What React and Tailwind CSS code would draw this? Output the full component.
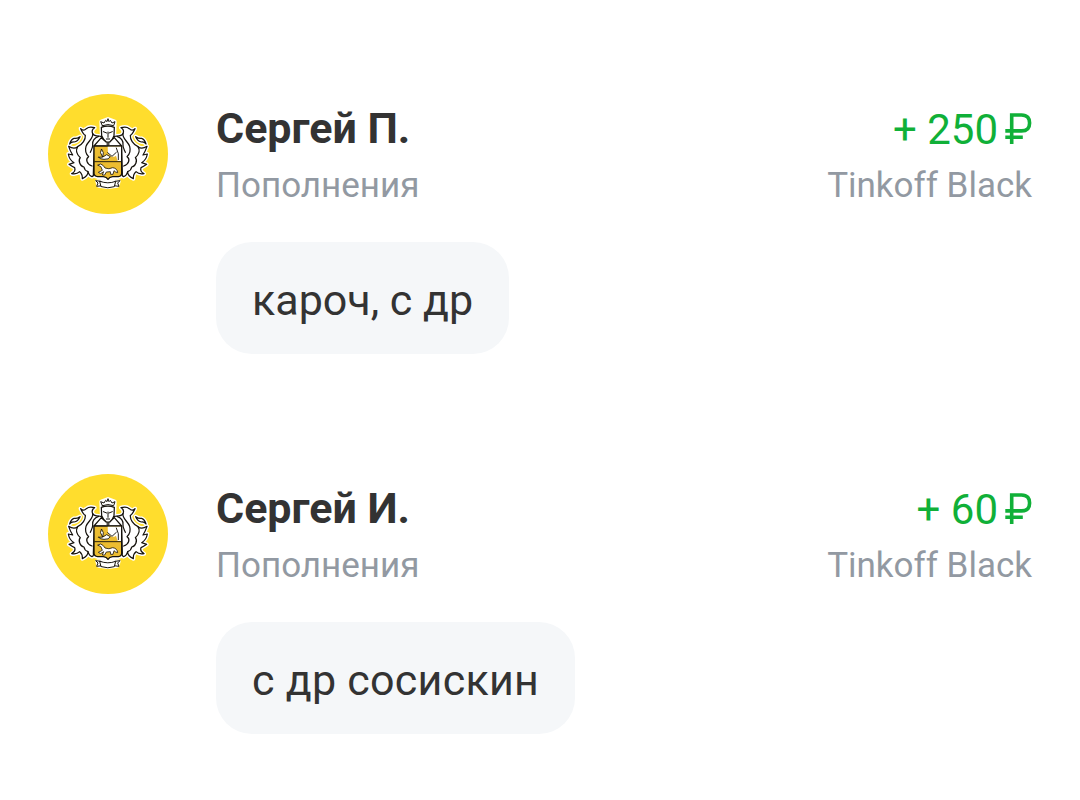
const operations = [
  { id: 1, name: 'Сергей П.', category: 'Пополнения', amount: '250', account: 'Tinkoff Black', message: 'кароч, с др', tracking: 'tracking-[0px]' },
  { id: 2, name: 'Сергей И.', category: 'Пополнения', amount: '60', account: 'Tinkoff Black', message: 'с др сосискин', tracking: 'tracking-[0.26px]' },
]

// One side of the mantling, mirrored for the other side
const LEAVES =
  'M163 180 L160 262 Q162 270 156 272 Q148 270 144 257 Q144 270 127 278 Q128 264 119 257 Q110 266 95 263 Q108 256 104 245 Q97 242 87 235 L102 230 Q88 222 85 204 L98 207 Q91 196 86 181 Q102 191 113 182 C128 175 137 160 136 148 Q130 145 122 128 Q131 137 139 128 Q148 120 164 125 Q153 131 158 143 Q162 150 176 150 L186 152 L184 166 Z'
const FOLDS =
  'M158 143 C161 158 143 166 138 181 C134 195 137 203 146 212 M176 151 C164 155 157 164 158 176 C159 187 153 193 151 199 M113 182 C106 194 112 207 121 215 M121 215 C113 224 121 242 132 243 M146 212 C136 218 139 234 156 240 M132 243 C133 250 138 255 144 257'
const PLUME = 'M89 174 Q93 160 102 157 Q110 159 120 152 Q114 166 102 168 Q94 167 89 174 Z'

function Side() {
  return (
    <>
      <path d={LEAVES} />
      <path d={PLUME} />
      <path d={FOLDS} fill="none" />
    </>
  )
}

function Crest() {
  return (
    <svg viewBox="24 24 360 360" className="size-full" aria-hidden="true">
      {/* white outline behind the whole emblem */}
      <g fill="#fff" stroke="#fff" strokeWidth="12" strokeLinejoin="round">
        <path d={LEAVES} />
        <path d={PLUME} />
        <g transform="matrix(-1 0 0 1 407 0)">
          <path d={LEAVES} />
          <path d={PLUME} />
        </g>
        <path d="M184 107 L204 99 L224 107 L222 160 L244 182 L244 270 L204 281 L164 270 L164 182 L186 160 Z" />
        <path d="M172 286 L204 290 L236 286 L232 299 L204 303 L176 299 Z" />
      </g>

      <g fill="#fff" stroke="#15120c" strokeWidth="3.7" strokeLinejoin="round" strokeLinecap="round">
        <Side />
        <g transform="matrix(-1 0 0 1 407 0)">
          <Side />
        </g>

        {/* helmet and crown */}
        <path d="M184 155 L162 180 H245 L223 155 L209 168 H199 Z" />
        <path d="M184 124 L185 149 Q190 161 199 168 H209 Q218 161 222 149 L223 124 Q204 117 184 124 Z" />
        <path d="M190 137 L200 141 M217 137 L207 141 M204 138 V154 M199 159 H209 M204 170 V179 M200 174 H208" fill="none" strokeWidth="3" />
        <path d="M187 119 L182 107 L192 111 L197 103 L201 107 L204 98 L207 107 L211 103 L216 111 L225 107 L221 119 Q204 112 187 119 Z" strokeWidth="3" />

        {/* shield */}
        <path d="M162 180 H245 V262 Q245 271 235 272 H218 Q208 273 204 280 Q200 273 190 272 H173 Q162 271 162 262 Z" fill="#ecbd31" strokeWidth="4" />
        <path d="M203 182 H243 V225 H233 L228 209 Q218 216 211 209 L204 203 Z" stroke="none" />
        <path d="M176 214 Q188 217 200 206 L211 212 Q207 221 192 220 Q181 220 176 214 Z M185 190 L190 200 L188 213 L182 201 Z" strokeWidth="2.6" />
        <path d="M229 186 L235 203 L235 221 M203 200 L216 211 L229 199 M164 227 H243" fill="none" strokeWidth="2.8" />
        <path d="M174 237 L182 234 L190 239 L195 246 Q207 251 218 245 Q232 247 233 260 L227 258 L222 254 L219 265 H212 L211 257 L199 258 L194 267 H187 L191 257 L182 263 L175 259 L187 253 L183 243 Z" strokeWidth="2.4" />

        {/* ribbon */}
        <path d="M182 286 L167 284 L174 291 L170 301 L186 299 Z M225 286 L240 284 L233 291 L237 301 L221 299 Z" strokeWidth="3" />
        <path d="M180 286 Q204 295 227 286 L223 302 Q204 309 184 302 Z" strokeWidth="3" />
      </g>
    </svg>
  )
}

function Ruble() {
  return (
    <svg viewBox="0 0 28 32" className="mb-0.5 ml-1.5 h-8 w-7" fill="none" stroke="currentColor" strokeWidth="3.6" aria-hidden="true">
      <path d="M7.7 31 V2 H17.5 C23.5 2 25.6 5.5 25.6 9.9 C25.6 14.4 23.5 17.9 17.5 17.9 H1.3 M1.3 24.2 H18.8" />
    </svg>
  )
}

function Operation({ name, category, amount, account, message, tracking }) {
  return (
    <article className="flex h-[380px] items-start">
      <div className="size-[120px] shrink-0 overflow-hidden rounded-full bg-[#ffdd2d]">
        <Crest />
      </div>
      <div className="ml-12 flex-1">
        <div className="flex h-[120px] justify-between pt-2">
          <div>
            <h2 className="text-[43px] leading-[52px] font-bold text-[#333333]">{name}</h2>
            <p className="text-[35px] leading-[64px] text-[#9299a2]">{category}</p>
          </div>
          <div className="text-right">
            <p className="flex items-center justify-end text-[42px] leading-[56px] text-[#10b038]">
              + {amount}
              <Ruble />
            </p>
            <p className="text-[35px] leading-[56px] text-[#9299a2]">{account}</p>
          </div>
        </div>
        <div className={`mt-7 flex h-28 w-fit items-center rounded-[36px] bg-[#f5f7f9] px-9 pt-1 text-[43px] leading-[54px] text-[#333333] ${tracking}`}>
          {message}
        </div>
      </div>
    </article>
  )
}

export default function App() {
  return (
    <main className="h-[800px] overflow-hidden bg-white px-12 pt-[94px] font-['Roboto',sans-serif]">
      {operations.map(op => (
        <Operation key={op.id} {...op} />
      ))}
    </main>
  )
}
